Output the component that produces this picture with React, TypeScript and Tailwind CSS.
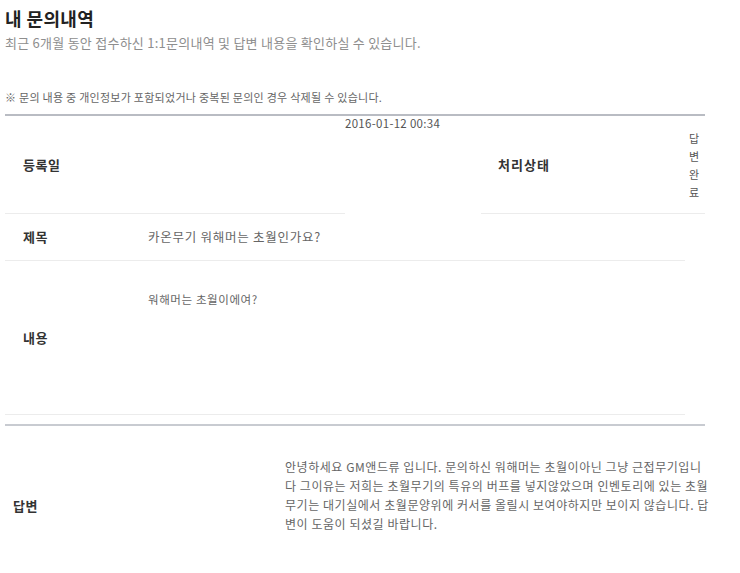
import React from "react";

const answerLines = [
  "안녕하세요 GM앤드류 입니다. 문의하신 워해머는 초월이아닌 그냥 근접무기입니",
  "다 그이유는 저희는 초월무기의 특유의 버프를 넣지않았으며 인벤토리에 있는 초월",
  "무기는 대기실에서 초월문양위에 커서를 올릴시 보여야하지만 보이지 않습니다. 답",
  "변이 도움이 되셨길 바랍니다.",
];

export default function App() {
  return (
    <div className="w-[740px] h-[573px] overflow-hidden bg-white font-['Noto_Sans_CJK_KR',sans-serif]">
      <div className="pl-[5px] pt-[6px]">
        <h1 className="text-[18px] leading-[24px] font-bold tracking-[0.4px] text-[#222]">내 문의내역</h1>
        <p className="mt-[4px] text-[13px] leading-[18px] tracking-[0.25px] text-[#8e8e8e]">
          최근 6개월 동안 접수하신 1:1문의내역 및 답변 내용을 확인하실 수 있습니다.
        </p>
        <p className="mt-[37px] text-[11px] leading-[16px] tracking-[0.27px] text-[#666]">
          ※ 문의 내용 중 개인정보가 포함되었거나 중복된 문의인 경우 삭제될 수 있습니다.
        </p>

        <div className="mt-[9px] w-[700px] border-t-2 border-[#b9bcc3]">
          {/* 등록일 / 처리상태 */}
          <div className="flex h-[98px]">
            <div className="w-[340px] flex items-center pl-[18px] border-b border-[#ececec] text-[13px] font-bold tracking-[0.6px] text-[#333]">
              등록일
            </div>
            <div className="w-[136px] pt-[0px] text-[11.5px] leading-[14px] tracking-[0.3px] text-[#555]">
              2016-01-12 00:34
            </div>
            <div className="w-[204px] flex items-center pl-[17px] border-b border-[#ececec] text-[13px] font-bold tracking-[1px] text-[#333]">
              처리상태
            </div>
            <div className="w-[20px] flex items-center justify-center border-b border-[#ececec]">
              <span className="w-[12px] break-all text-[11px] leading-[18px] text-[#555]">답변완료</span>
            </div>
          </div>

          {/* 제목 */}
          <div className="flex h-[47px] w-[680px] items-center border-b border-[#ececec]">
            <div className="w-[143px] pl-[18px] text-[13px] font-bold tracking-[0.6px] text-[#333]">제목</div>
            <div className="text-[12.5px] tracking-[0.75px] text-[#666]">카온무기 워해머는 초월인가요?</div>
          </div>

          {/* 내용 */}
          <div className="flex h-[154px] w-[680px] border-b border-[#ececec]">
            <div className="w-[143px] pl-[18px] flex items-center text-[13px] font-bold tracking-[0.6px] text-[#333]">
              내용
            </div>
            <div className="pt-[29px] text-[11.5px] leading-[18px] tracking-[0.6px] text-[#666]">워해머는 초월이에여?</div>
          </div>

          {/* 답변 */}
          <div className="mt-[9px] flex h-[162px] border-t-2 border-[#c8cbd1]">
            <div className="w-[283px] pl-[8px] flex items-center text-[13px] font-bold tracking-[0.6px] text-[#333]">
              답변
            </div>
            <div className="w-[420px] shrink-0 pt-[31px] text-[12px] leading-[19px] tracking-[0.55px] text-[#666]">
              {answerLines.map((line) => (
                <div key={line} className="whitespace-nowrap">
                  {line}
                </div>
              ))}
            </div>
          </div>
        </div>
      </div>
    </div>
  );
}
